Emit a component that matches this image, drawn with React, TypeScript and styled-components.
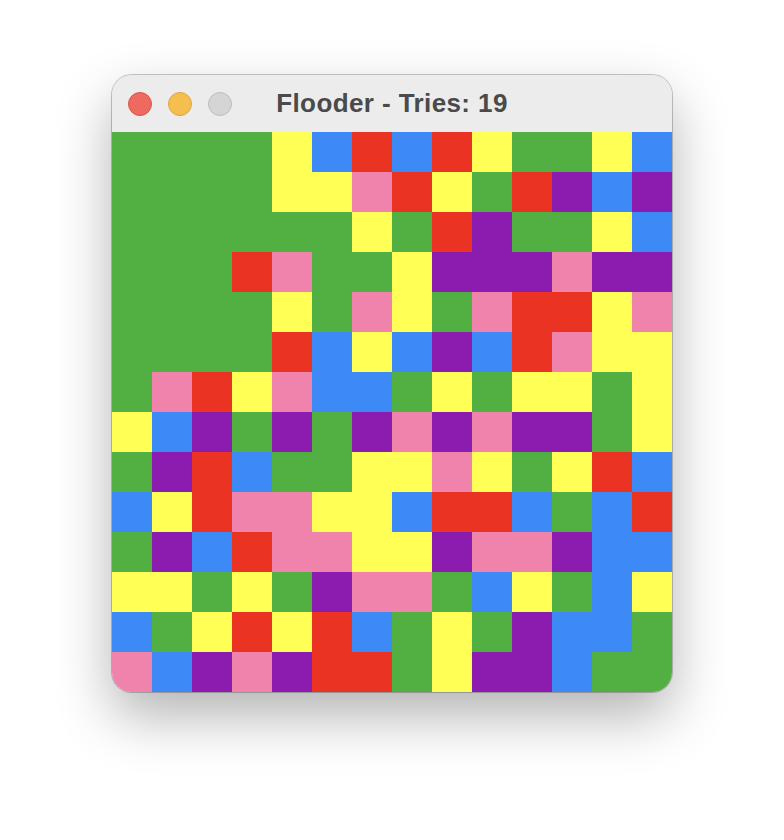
import styled, { createGlobalStyle } from 'styled-components';

const GlobalStyle = createGlobalStyle`
  html, body {
    margin: 0;
    padding: 0;
    background: #ffffff;
  }
  body {
    font-family: "Liberation Sans", Arial, sans-serif;
  }
`;

const COLORS: Record<string, string> = {
  G: '#52b043',
  Y: '#ffff55',
  B: '#3d8af7',
  R: '#ea3323',
  P: '#ef83ac',
  U: '#8c1caf',
};

const BOARD = [
  'GGGGYBRBRYGGYB',
  'GGGGYYPRYGRUBU',
  'GGGGGGYGRUGGYB',
  'GGGRPGGYUUUPUU',
  'GGGGYGPYGPRRYP',
  'GGGGRBYBUBRPYY',
  'GPRYPBBGYGYYGY',
  'YBUGUGUPUPUUGY',
  'GURBGGYYPYGYRB',
  'BYRPPYYBRRBGBR',
  'GUBRPPYYUPPUBB',
  'YYGYGUPPGBYGBY',
  'BGYRYRBGYGUBBG',
  'PBUPURRGYUUBGG',
];

const Page = styled.div`
  display: flex;
  justify-content: center;
  align-items: flex-start;
  padding-top: 75px;
  height: 840px;
  box-sizing: border-box;
`;

const Window = styled.div`
  width: 560px;
  border-radius: 20px;
  overflow: hidden;
  background: #ececec;
  box-shadow: 0 0 0 1px rgba(0, 0, 0, 0.22), 0 24px 55px rgba(0, 0, 0, 0.3);
`;

const TitleBar = styled.div`
  position: relative;
  height: 57px;
  display: flex;
  align-items: center;
  justify-content: center;
  background: #ececec;
`;

const Lights = styled.div`
  position: absolute;
  left: 16px;
  top: 17px;
  display: flex;
  gap: 16px;
`;

const Light = styled.span<{ $fill: string; $edge: string }>`
  width: 22px;
  height: 22px;
  border-radius: 50%;
  background: ${(p) => p.$fill};
  border: 1px solid ${(p) => p.$edge};
`;

const Title = styled.h1`
  margin: 0;
  font-size: 26px;
  font-weight: 700;
  color: #4a4a4a;
  letter-spacing: 0.4px;
`;

const Board = styled.div`
  display: grid;
  grid-template-columns: repeat(14, 40px);
  grid-auto-rows: 40px;
`;

const Cell = styled.div<{ $color: string }>`
  background: ${(p) => p.$color};
`;

export default function App() {
  return (
    <>
      <GlobalStyle />
      <Page>
        <Window>
          <TitleBar>
            <Lights>
              <Light $fill="#ee6a5f" $edge="#d6544a" />
              <Light $fill="#f5bf4f" $edge="#d9a441" />
              <Light $fill="#d5d5d5" $edge="#bdbdbd" />
            </Lights>
            <Title>Flooder - Tries: 19</Title>
          </TitleBar>
          <Board>
            {BOARD.map((row, r) =>
              row.split('').map((c, i) => <Cell key={`${r}-${i}`} $color={COLORS[c]} />)
            )}
          </Board>
        </Window>
      </Page>
    </>
  );
}
